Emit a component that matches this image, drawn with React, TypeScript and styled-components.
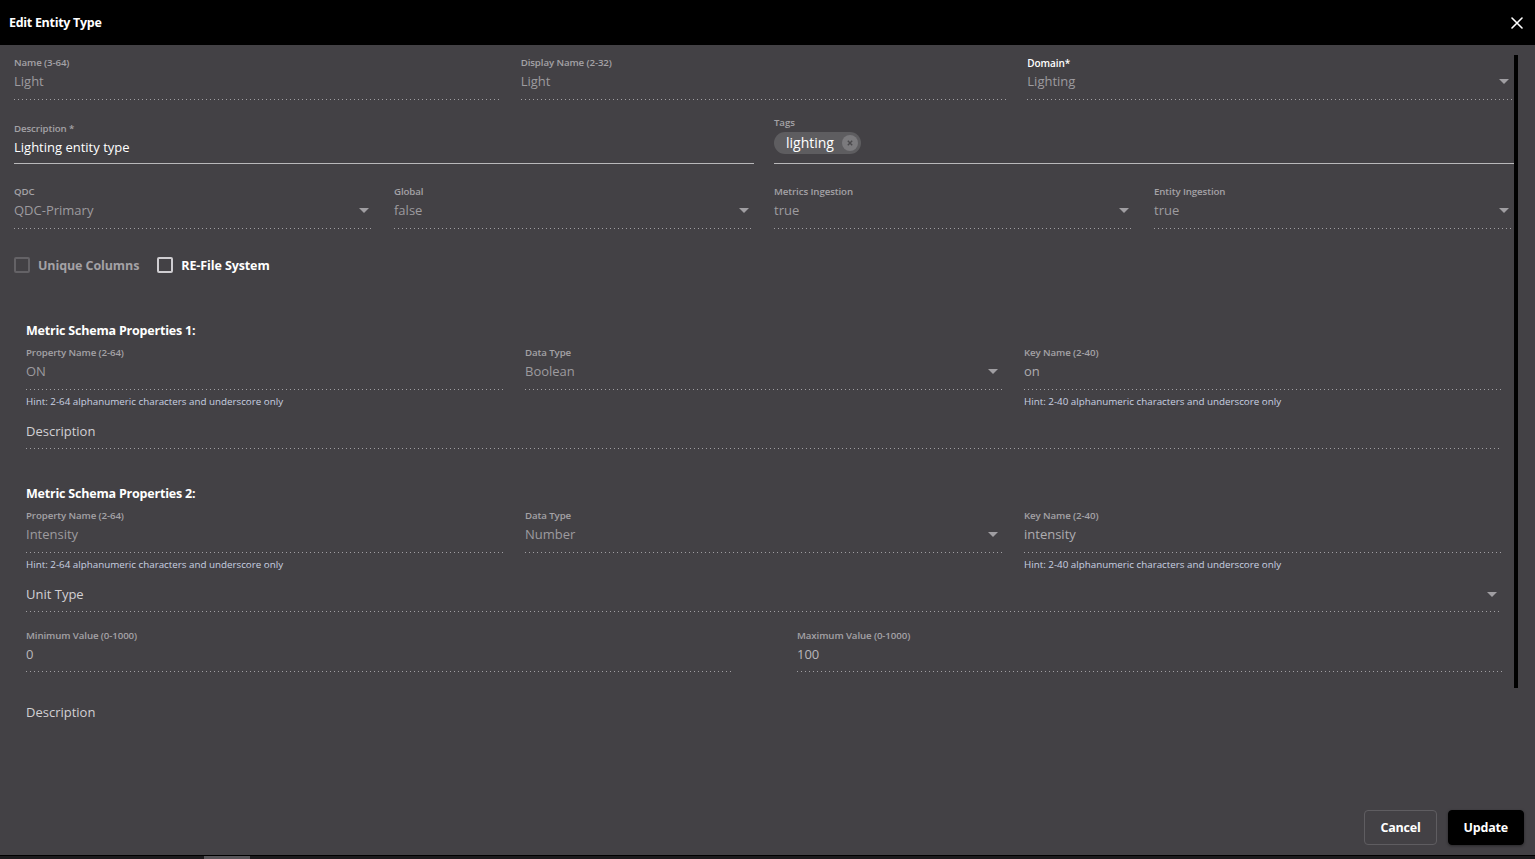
import React from "react";
import styled, { createGlobalStyle } from "styled-components";

const GlobalStyle = createGlobalStyle`
  html, body {
    margin: 0;
    height: 100%;
  }
  body {
    background: #434145;
    font-family: "Open Sans", "Noto Sans", sans-serif;
    overflow: hidden;
  }
  #root {
    height: 100%;
  }
`;

const Dialog = styled.div`
  height: 100vh;
  display: flex;
  flex-direction: column;
`;

const Header = styled.header`
  height: 45px;
  flex: none;
  background: #000;
  display: flex;
  align-items: center;
  justify-content: space-between;
  padding: 0 12px 0 9px;
`;

const Title = styled.h2`
  margin: 0;
  font-size: 12.5px;
  font-weight: 700;
  color: #fff;
  letter-spacing: -0.3px;
`;

const CloseButton = styled.button`
  background: none;
  border: 0;
  padding: 0;
  display: flex;
  cursor: pointer;
`;

const BodyWrap = styled.div`
  flex: 1;
  min-height: 0;
  display: flex;
  margin: 0 17px 0 14px;
`;

const Body = styled.div`
  flex: 1;
  min-width: 0;
  overflow-y: auto;
  scrollbar-width: none;
  padding: 12px 0 20px 0;

  &::-webkit-scrollbar {
    display: none;
  }
`;

const ScrollRail = styled.div`
  width: 4px;
  flex: none;
  padding-top: 10px;
`;

const ScrollThumb = styled.div`
  height: 633px;
  background: #000;
`;

const Row = styled.div<{ $cols: number; $gap?: number; $mb?: number }>`
  display: grid;
  grid-template-columns: repeat(${(p) => p.$cols}, 1fr);
  column-gap: ${(p) => p.$gap ?? 20}px;
  align-items: end;
  margin-bottom: ${(p) => p.$mb ?? 22}px;
`;

const FieldBox = styled.div`
  min-width: 0;
`;

const Label = styled.label<{ $light?: boolean }>`
  display: block;
  font-size: ${(p) => (p.$light ? "10px" : "9.7px")};
  line-height: 12px;
  font-weight: 600;
  color: ${(p) => (p.$light ? "#ffffff" : "#a4a2a6")};
  letter-spacing: -0.1px;
`;

const ValueRow = styled.div<{ $solid?: boolean; $color?: string; $pb?: number; $h?: number }>`
  display: flex;
  align-items: ${(p) => (p.$h ? "flex-start" : "center")};
  height: ${(p) => p.$h ?? 24}px;
  line-height: 24px;
  padding-bottom: ${(p) => p.$pb ?? 6}px;
  font-size: 13px;
  color: ${(p) => p.$color ?? "#9d9b9f"};
  ${(p) =>
    p.$solid
      ? "border-bottom: 1px solid #b9b8ba;"
      : `
    padding-bottom: ${(p.$pb ?? 6) + 1}px;
    background-image: linear-gradient(to right, #a09ea2 1px, transparent 1px);
    background-size: 4px 1px;
    background-repeat: repeat-x;
    background-position: left bottom;
  `}
`;

const Arrow = styled.span`
  margin-left: auto;
  margin-right: 5px;
  width: 0;
  height: 0;
  border-left: 5px solid transparent;
  border-right: 5px solid transparent;
  border-top: 5px solid #a09ea2;
`;

const ChipRow = styled.div`
  display: flex;
  padding: 3px 0 9px;
  border-bottom: 1px solid #b9b8ba;
`;

const Chip = styled.span`
  display: inline-flex;
  align-items: center;
  gap: 8px;
  height: 22px;
  padding: 0 3px 0 12px;
  border-radius: 11px;
  background: #5e5d60;
  color: #fff;
  font-size: 14px;
  font-weight: 500;
  line-height: 20px;
`;

const ChipClose = styled.span`
  width: 16px;
  height: 16px;
  border-radius: 50%;
  background: #7b7a7d;
  display: flex;
  align-items: center;
  justify-content: center;
`;

const CheckRow = styled.div`
  display: flex;
  align-items: center;
  gap: 18px;
  height: 28px;
`;

const CheckItem = styled.label<{ $active?: boolean }>`
  display: flex;
  align-items: center;
  gap: 8px;
  font-size: 12.5px;
  font-weight: 700;
  color: ${(p) => (p.$active ? "#ffffff" : "#a4a2a6")};
  letter-spacing: -0.1px;
`;

const Box = styled.span<{ $active?: boolean }>`
  width: 12px;
  height: 12px;
  border: 2px solid ${(p) => (p.$active ? "#cfcdd1" : "#646266")};
  border-radius: 2px;
`;

const Section = styled.section<{ $mt: number }>`
  padding: 0 12px;
  margin-top: ${(p) => p.$mt}px;
`;

const SectionTitle = styled.h3`
  margin: 0 0 7px;
  font-size: 12.5px;
  line-height: 18px;
  font-weight: 700;
  color: #fff;
  letter-spacing: -0.2px;
`;

const Hint = styled.div`
  margin-top: 6px;
  font-size: 9.8px;
  line-height: 12px;
  color: #c9d1e2;
`;

const Spacer = styled.div<{ $h: number }>`
  height: ${(p) => p.$h}px;
`;

const Footer = styled.footer`
  height: 120px;
  flex: none;
  display: flex;
  justify-content: flex-end;
  align-items: flex-end;
  gap: 11px;
  padding: 0 11px 10px 0;
  box-sizing: border-box;
`;

const Button = styled.button<{ $primary?: boolean }>`
  height: 35px;
  padding: 0 15px;
  border-radius: 4px;
  font-family: inherit;
  font-size: 12.5px;
  font-weight: 700;
  color: #fff;
  cursor: pointer;
  letter-spacing: -0.2px;
  background: ${(p) => (p.$primary ? "#000" : "transparent")};
  border: 1px solid ${(p) => (p.$primary ? "#000" : "#5f5d61")};
  box-shadow: ${(p) => (p.$primary ? "0 1px 3px rgba(0,0,0,0.4)" : "none")};
`;

const BottomBar = styled.div`
  height: 4px;
  flex: none;
  background: #1c1b1d;
  border-top: 1px solid #000;
  box-sizing: border-box;
  display: flex;
`;

const BottomThumb = styled.div`
  margin-left: 204px;
  width: 46px;
  background: #58565a;
`;

type FieldProps = {
  label?: string;
  value: string;
  select?: boolean;
  solid?: boolean;
  light?: boolean;
  color?: string;
  pb?: number;
  h?: number;
};

function Field({ label, value, select, solid, light, color, pb, h }: FieldProps) {
  return (
    <FieldBox>
      {label && <Label $light={light}>{label}</Label>}
      <ValueRow $solid={solid} $color={color} $pb={pb} $h={h}>
        {value}
        {select && <Arrow />}
      </ValueRow>
    </FieldBox>
  );
}

function SchemaFields({ name, type, keyName }: { name: string; type: string; keyName: string }) {
  return (
    <Row $cols={3} $gap={21} $mb={0}>
      <FieldBox>
        <Field label="Property Name (2-64)" value={name} />
        <Hint>Hint: 2-64 alphanumeric characters and underscore only</Hint>
      </FieldBox>
      <FieldBox>
        <Field label="Data Type" value={type} select />
        <Hint>&nbsp;</Hint>
      </FieldBox>
      <FieldBox>
        <Field label="Key Name (2-40)" value={keyName} color="#aeacb0" />
        <Hint>Hint: 2-40 alphanumeric characters and underscore only</Hint>
      </FieldBox>
    </Row>
  );
}

export default function App() {
  return (
    <Dialog>
      <GlobalStyle />
      <Header>
        <Title>Edit Entity Type</Title>
        <CloseButton aria-label="close">
          <svg width="12" height="12" viewBox="0 0 12 12">
            <path d="M1 1L11 11M11 1L1 11" stroke="#fff" strokeWidth="1.6" strokeLinecap="round" />
          </svg>
        </CloseButton>
      </Header>

      <BodyWrap>
        <Body>
          <Row $cols={3} $mb={17}>
            <Field label="Name (3-64)" value="Light" />
            <Field label="Display Name (2-32)" value="Light" />
            <Field label="Domain*" value="Lighting" light select />
          </Row>

          <Row $cols={2}>
            <Field label="Description *" value="Lighting entity type" solid color="#ffffff" pb={4} />
            <FieldBox>
              <Label>Tags</Label>
              <ChipRow>
                <Chip>
                  lighting
                  <ChipClose>
                    <svg width="6" height="6" viewBox="0 0 6 6">
                      <path d="M0.8 0.8L5.2 5.2M5.2 0.8L0.8 5.2" stroke="#4a494c" strokeWidth="1.4" />
                    </svg>
                  </ChipClose>
                </Chip>
              </ChipRow>
            </FieldBox>
          </Row>

          <Row $cols={4}>
            <Field label="QDC" value="QDC-Primary" select />
            <Field label="Global" value="false" select />
            <Field label="Metrics Ingestion" value="true" select />
            <Field label="Entity Ingestion" value="true" select />
          </Row>

          <CheckRow>
            <CheckItem>
              <Box />
              Unique Columns
            </CheckItem>
            <CheckItem $active>
              <Box $active />
              RE-File System
            </CheckItem>
          </CheckRow>

          <Section $mt={43}>
            <SectionTitle>Metric Schema Properties 1:</SectionTitle>
            <SchemaFields name="ON" type="Boolean" keyName="on" />
            <Spacer $h={11} />
            <Field value="Description" color="#d2d0d4" pb={5} />
          </Section>

          <Section $mt={36}>
            <SectionTitle>Metric Schema Properties 2:</SectionTitle>
            <SchemaFields name="Intensity" type="Number" keyName="intensity" />
            <Spacer $h={11} />
            <Field value="Unit Type" color="#d2d0d4" select pb={5} />
            <Spacer $h={18} />
            <Row $cols={2} $gap={66} $mb={0}>
              <Field label="Minimum Value (0-1000)" value="0" color="#b9b7bb" pb={5} />
              <Field label="Maximum Value (0-1000)" value="100" color="#b9b7bb" pb={5} />
            </Row>
            <Spacer $h={28} />
            <Field value="Description" color="#d2d0d4" h={60} />
          </Section>
        </Body>
        <ScrollRail>
          <ScrollThumb />
        </ScrollRail>
      </BodyWrap>

      <Footer>
        <Button>Cancel</Button>
        <Button $primary>Update</Button>
      </Footer>
      <BottomBar>
        <BottomThumb />
      </BottomBar>
    </Dialog>
  );
}
